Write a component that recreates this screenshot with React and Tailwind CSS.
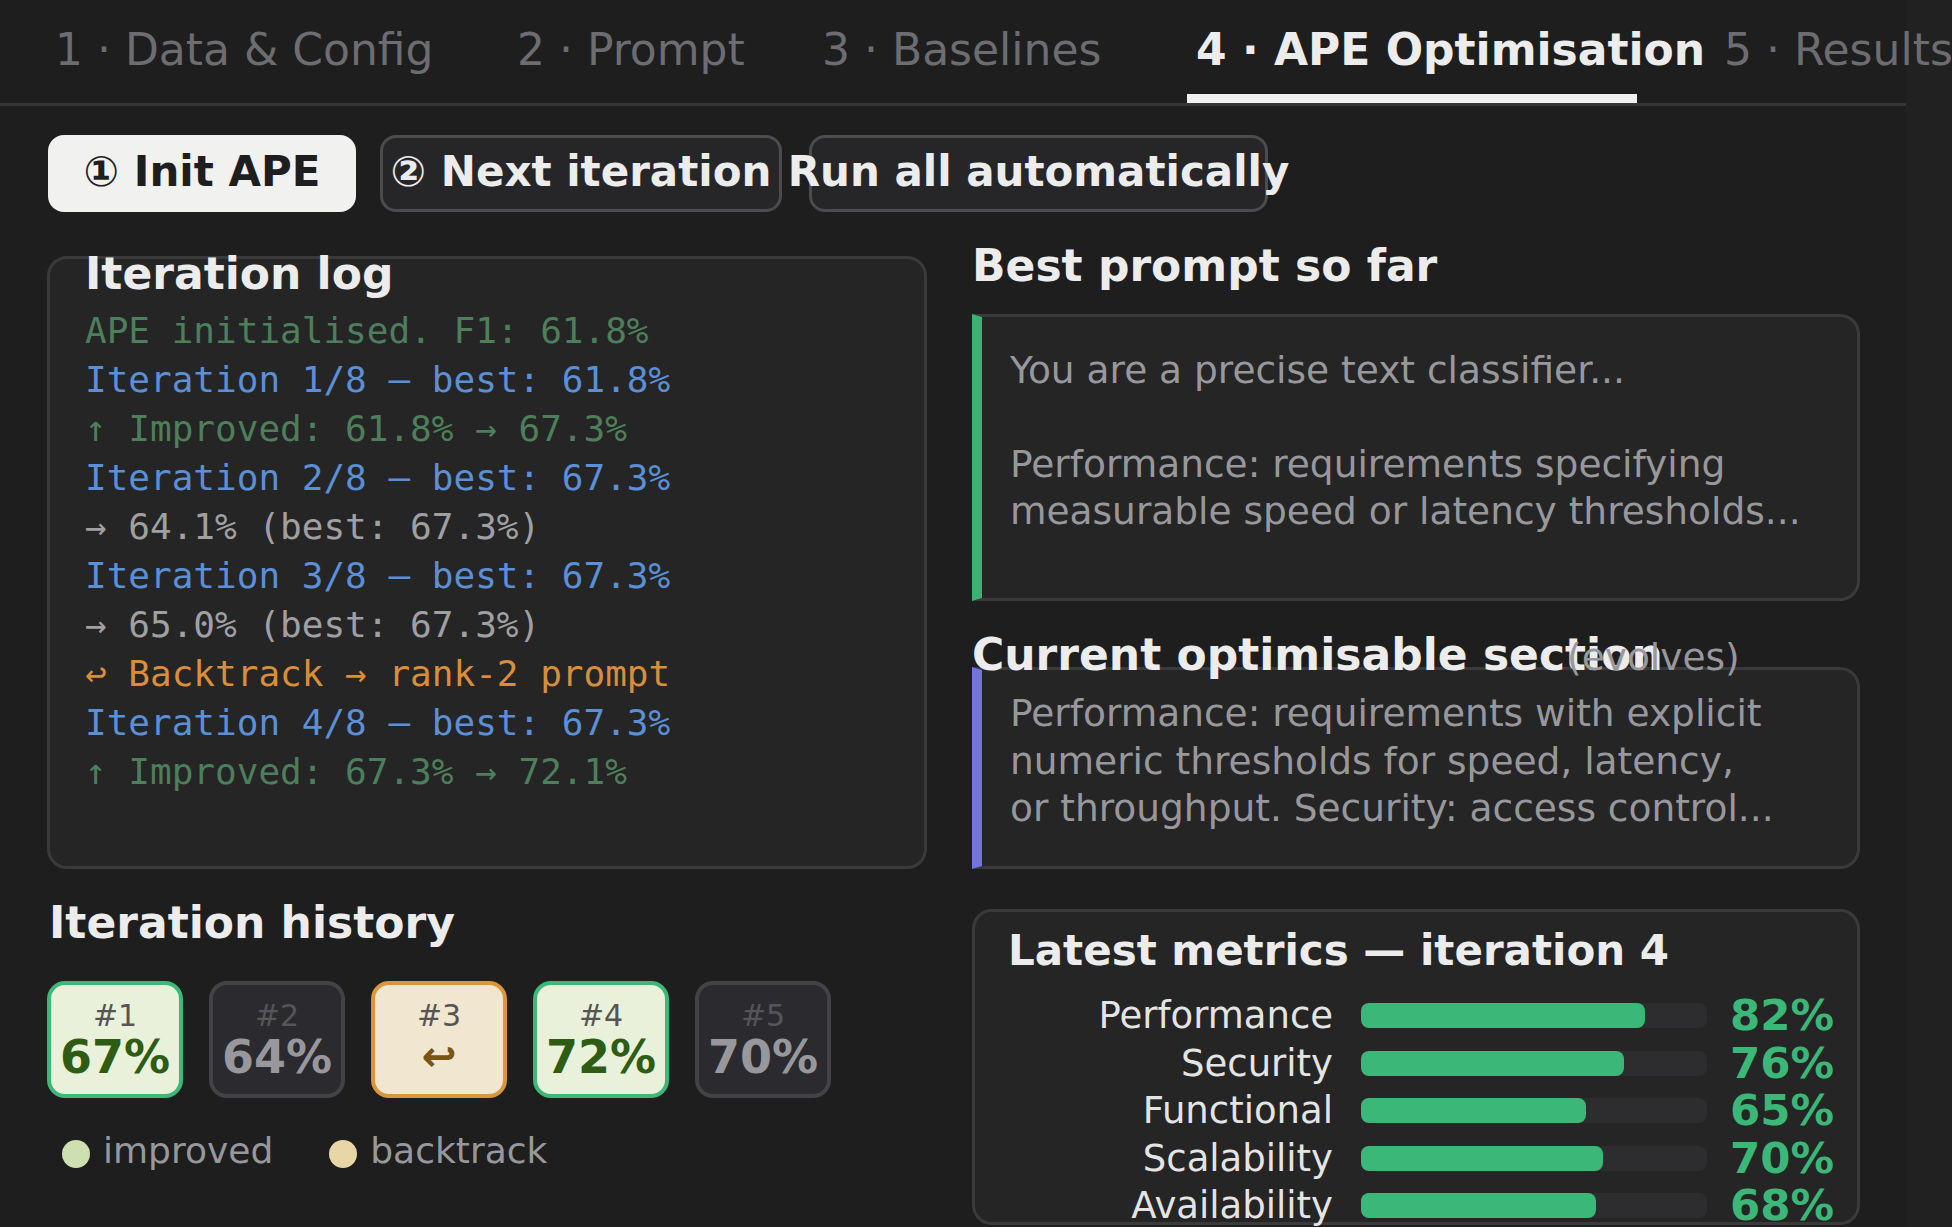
import React from "react";

const TABS = [
    { label: "1 · Data & Config", w: "w-[462px]" },
    { label: "2 · Prompt", w: "w-[305px]" },
    { label: "3 · Baselines", w: "w-[374px]" },
    { label: "4 · APE Optimisation", w: "w-[528px]", active: true },
    { label: "5 · Results", w: "w-auto" },
];

const LOG = [
    { text: "APE initialised. F1: 61.8%", color: "text-[#4d7f5b]" },
    { text: "Iteration 1/8 — best: 61.8%", color: "text-[#5b8fd6]" },
    { text: "↑ Improved: 61.8% → 67.3%", color: "text-[#4d7f5b]" },
    { text: "Iteration 2/8 — best: 67.3%", color: "text-[#5b8fd6]" },
    { text: "→ 64.1% (best: 67.3%)", color: "text-[#a0a0a2]" },
    { text: "Iteration 3/8 — best: 67.3%", color: "text-[#5b8fd6]" },
    { text: "→ 65.0% (best: 67.3%)", color: "text-[#a0a0a2]" },
    { text: "↩ Backtrack → rank-2 prompt", color: "text-[#d98e3a]" },
    { text: "Iteration 4/8 — best: 67.3%", color: "text-[#5b8fd6]" },
    { text: "↑ Improved: 67.3% → 72.1%", color: "text-[#4d7f5b]" },
];

const HISTORY = [
    { n: "#1", v: "67%", kind: "improved" },
    { n: "#2", v: "64%", kind: "plain" },
    { n: "#3", v: "↩", kind: "backtrack" },
    { n: "#4", v: "72%", kind: "improved" },
    { n: "#5", v: "70%", kind: "plain" },
];

const METRICS = [
    { name: "Performance", value: 82 },
    { name: "Security", value: 76 },
    { name: "Functional", value: 65 },
    { name: "Scalability", value: 70 },
    { name: "Availability", value: 68 },
];

function HistoryCard({ item }) {
    const box =
        item.kind === "improved"
            ? "bg-[#e9f1db] border-[#3cb878]"
            : item.kind === "backtrack"
            ? "bg-[#f1e6d0] border-[#d9963a]"
            : "bg-[#2b2b2f] border-[#434347]";
    const num = item.kind === "plain" ? "text-[#55555a]" : "text-[#555555]";
    const val =
        item.kind === "improved"
            ? "text-[#2e5c12] text-[46px]"
            : item.kind === "backtrack"
            ? "text-[#7a5412] text-[42px]"
            : "text-[#98989c] text-[46px]";

    return (
        <div className={`w-[136px] h-[117px] shrink-0 rounded-[18px] border-4 flex flex-col items-center pt-[13px] ${box}`}>
            <div className={`text-[30px] leading-[36px] ${num}`}>{item.n}</div>
            <div className={`font-bold leading-[46px] ${val}`}>{item.v}</div>
        </div>
    );
}

function MetricRow({ m }) {
    return (
        <div className="flex items-center h-[47.5px]">
            <div className="w-[325px] text-right text-[37px] leading-[47.5px] text-[#e4e4e4]">{m.name}</div>
            <div className="ml-[28px] w-[346px] h-[25px] rounded-[8px] bg-[#2d2d30]">
                <div className="h-full rounded-[8px] bg-[#3bb878]" style={{ width: `${m.value}%` }} />
            </div>
            <div className="ml-[23px] text-[43.5px] leading-[47.5px] font-bold text-[#3bb878]">{m.value}%</div>
        </div>
    );
}

export default function App() {
    return (
        <div className="w-[1952px] h-[1227px] overflow-hidden bg-[#1e1e1e] flex font-['DejaVu_Sans',sans-serif]">
            <div className="w-[1906px] shrink-0">
                {/* Step tabs */}
                <div className="flex h-[106px] border-b-[3px] border-[#363638] pl-[55px]">
                    {TABS.map((t) => (
                        <div key={t.label} className={`relative shrink-0 whitespace-nowrap pt-[24px] text-[44px] leading-[52px] ${t.w} ${t.active ? "font-bold text-[#ececec]" : "text-[#6c6c71]"}`}>
                            {t.label}
                            {t.active && <div className="absolute left-[-9px] bottom-0 w-[450px] h-[9px] bg-[#f0f0ee]" />}
                        </div>
                    ))}
                </div>

                {/* Actions */}
                <div className="flex mt-[29px] pl-[48px] text-[42px] font-bold whitespace-nowrap">
                    <div className="w-[308px] h-[77px] pb-[5px] rounded-[16px] bg-[#f1f1ef] text-[#1e1e1e] flex items-center justify-center">① Init APE</div>
                    <div className="ml-[24px] w-[402px] h-[77px] pb-[5px] rounded-[16px] border-[3px] border-[#4b4b50] bg-[#262628] text-[#ececec] flex items-center justify-center">② Next iteration</div>
                    <div className="ml-[27px] w-[459px] h-[77px] pb-[5px] rounded-[16px] border-[3px] border-[#4b4b50] bg-[#262628] text-[#ececec] flex items-center justify-center">Run all automatically</div>
                </div>

                <div className="flex gap-[45px] mt-[28px] pl-[47px]">
                    {/* Left column */}
                    <div className="w-[880px] shrink-0">
                        <div className="mt-[16px] h-[613px] rounded-[20px] border-[3px] border-[#3a3a3c] bg-[#252526] pl-[35px]">
                            <div className="mt-[-11px] text-[44px] leading-[52px] font-bold text-[#ececec]">Iteration log</div>
                            <div className="mt-[6px] font-['DejaVu_Sans_Mono',monospace] text-[36px] leading-[49px] whitespace-pre">
                                {LOG.map((l, i) => (
                                    <div key={i} className={l.color}>{l.text}</div>
                                ))}
                            </div>
                        </div>

                        <div className="mt-[28px] pl-[2px] text-[44px] leading-[52px] font-bold text-[#ececec]">Iteration history</div>
                        <div className="flex gap-[26px] mt-[32px]">
                            {HISTORY.map((h) => (
                                <HistoryCard key={h.n} item={h} />
                            ))}
                        </div>
                        <div className="flex items-center mt-[31px] text-[36px] leading-[44px] text-[#98989c]">
                            <span className="ml-[15px] mt-[6px] w-[28px] h-[28px] rounded-full bg-[#cfe0b0]" />
                            <span className="ml-[13px]">improved</span>
                            <span className="ml-[56px] mt-[6px] w-[28px] h-[28px] rounded-full bg-[#e9d6a6]" />
                            <span className="ml-[13px]">backtrack</span>
                        </div>
                    </div>

                    {/* Right column */}
                    <div className="w-[888px] shrink-0">
                        <div className="text-[44px] leading-[52px] font-bold text-[#ececec]">Best prompt so far</div>
                        <div className="mt-[22px] h-[287px] rounded-r-[20px] border-[3px] border-[#3a3a3c] border-l-[10px] border-l-[#3bb273] bg-[#252526] pl-[28px] pt-[30px] text-[37.5px] leading-[47px] text-[#98989c] whitespace-pre">
                            {"You are a precise text classifier...\n\nPerformance: requirements specifying\nmeasurable speed or latency thresholds..."}
                        </div>

                        <div className="relative mt-[28px] text-[44px] leading-[52px] font-bold text-[#ececec] whitespace-nowrap">
                            Current optimisable section
                            <span className="absolute left-[595px] top-[2px] text-[37.5px] font-normal text-[#98989c]">(evolves)</span>
                        </div>
                        <div className="mt-[-14px] h-[202px] rounded-r-[20px] border-[3px] border-[#3a3a3c] border-l-[10px] border-l-[#7474e0] bg-[#252526] pl-[28px] pt-[20px] text-[37.5px] leading-[47.5px] text-[#98989c] whitespace-pre">
                            {"Performance: requirements with explicit\nnumeric thresholds for speed, latency,\nor throughput. Security: access control..."}
                        </div>

                        <div className="mt-[40px] h-[316px] rounded-[20px] border-[3px] border-[#3a3a3c] bg-[#252526] pl-[33px] pt-[14px]">
                            <div className="text-[42px] leading-[50px] font-bold text-[#ececec]">Latest metrics — iteration 4</div>
                            <div className="mt-[16px]">
                                {METRICS.map((m) => (
                                    <MetricRow key={m.name} m={m} />
                                ))}
                            </div>
                        </div>
                    </div>
                </div>
            </div>
            <div className="flex-1 bg-[#212121]" />
        </div>
    );
}
